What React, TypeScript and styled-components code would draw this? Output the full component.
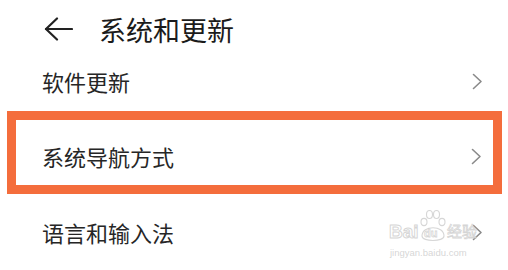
import React from "react";
import styled, { createGlobalStyle } from "styled-components";

const Global = createGlobalStyle`
  html, body { margin: 0; padding: 0; background: #ffffff; }
  body { font-family: "Noto Sans CJK SC", "Noto Sans", sans-serif; }
`;

const Page = styled.div`
  position: relative;
  width: 508px;
  height: 270px;
  overflow: hidden;
  background: #ffffff;
  display: flex;
  flex-direction: column;
`;

const Header = styled.div`
  height: 60px;
  display: flex;
  align-items: center;
  padding-left: 44px;
  gap: 26px;
  box-sizing: border-box;
`;

const Title = styled.div`
  font-size: 27px;
  line-height: 1;
  color: #1b1b1b;
  font-weight: 400;
`;

const Row = styled.div<{ $h: number }>`
  height: ${(p) => p.$h}px;
  display: flex;
  align-items: center;
  justify-content: space-between;
  padding: 0 25px 0 42px;
  box-sizing: border-box;
`;

const Highlight = styled.div`
  height: 85px;
  margin: 0 6px 0 7px;
  border: 9px solid #f46d3c;
  box-sizing: border-box;
  display: flex;
  align-items: center;
  justify-content: space-between;
  padding: 7px 11px 0 26px;
`;

const Label = styled.div`
  font-size: 22px;
  line-height: 1;
  color: #262626;
  font-weight: 400;
`;

const Watermark = styled.div`
  position: absolute;
  left: 388px;
  top: 209px;
  width: 100px;
  height: 54px;
  pointer-events: none;
  font-family: "Liberation Sans", sans-serif;
`;

const WmBig = styled.div`
  position: absolute;
  left: 1px;
  top: 12px;
  font-size: 19px;
  font-weight: 700;
  color: rgba(255, 255, 255, 0.6);
  -webkit-text-stroke: 1px rgba(200, 200, 200, 0.75);
`;

const WmDu = styled.div`
  position: absolute;
  left: 36px;
  top: 18px;
  font-size: 11px;
  font-weight: 700;
  color: rgba(255, 255, 255, 0.6);
  -webkit-text-stroke: 0.8px rgba(200, 200, 200, 0.75);
`;

const WmCjk = styled.div`
  position: absolute;
  left: 59px;
  top: 13px;
  font-size: 15px;
  line-height: 1.2;
  font-family: "Noto Sans CJK SC", sans-serif;
  color: rgba(255, 255, 255, 0.6);
  -webkit-text-stroke: 0.8px rgba(200, 200, 200, 0.75);
`;

const WmSmall = styled.div`
  position: absolute;
  left: 2px;
  top: 38px;
  font-size: 9.5px;
  color: rgba(200, 200, 200, 0.75);
  white-space: nowrap;
`;

const Chevron = () => (
  <svg width="11" height="17" viewBox="0 0 11 17">
    <polyline
      points="1.5,1.5 9,8.5 1.5,15.5"
      fill="none"
      stroke="#8a8a8a"
      strokeWidth="1.6"
      strokeLinecap="round"
      strokeLinejoin="round"
    />
  </svg>
);

const BackArrow = () => (
  <svg width="29" height="24" viewBox="0 0 29 24">
    <g fill="none" stroke="#222" strokeWidth="2.2" strokeLinecap="round" strokeLinejoin="round">
      <line x1="2" y1="12" x2="28" y2="12" />
      <polyline points="13,1.5 2,12 13,22.5" />
    </g>
  </svg>
);

const Paw = () => (
  <svg
    width="28"
    height="36"
    viewBox="0 0 28 36"
    style={{ position: "absolute", left: 31, top: 0 }}
  >
    <g fill="rgba(255,255,255,0.5)" stroke="rgba(200,200,200,0.75)" strokeWidth="1.1">
      <ellipse cx="5" cy="13" rx="3" ry="3.6" />
      <ellipse cx="10.5" cy="5.5" rx="3" ry="4" />
      <ellipse cx="17.5" cy="5.5" rx="3" ry="4" />
      <ellipse cx="23" cy="13" rx="3" ry="3.6" />
      <path d="M3 27 C3 16 25 16 25 27 C25 33 3 33 3 27 Z" />
    </g>
  </svg>
);

export default function App() {
  return (
    <>
      <Global />
      <Page>
        <Header>
          <BackArrow />
          <Title>系统和更新</Title>
        </Header>
        <Row $h={48}>
          <Label>软件更新</Label>
          <Chevron />
        </Row>
        <Row $h={7} />
        <Highlight>
          <Label>系统导航方式</Label>
          <Chevron />
        </Highlight>
        <Row $h={78}>
          <Label>语言和输入法</Label>
          <Chevron />
        </Row>
        <Watermark>
          <Paw />
          <WmBig>Bai</WmBig>
          <WmDu>du</WmDu>
          <WmCjk>经验</WmCjk>
          <WmSmall>jingyan.baidu.com</WmSmall>
        </Watermark>
      </Page>
    </>
  );
}
